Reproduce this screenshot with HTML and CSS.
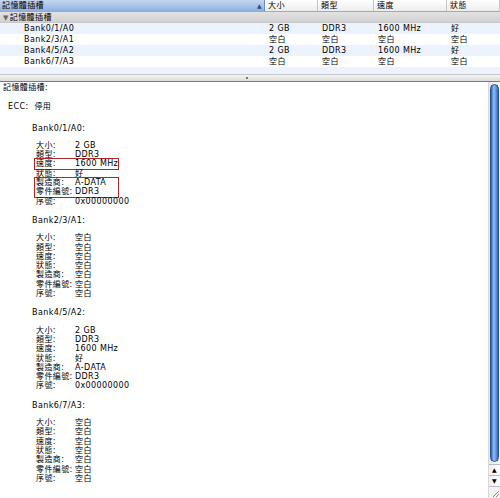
FILE: index.html
```html
<!DOCTYPE html>
<html>
<head>
<meta charset="utf-8">
<link rel="stylesheet" href="styles.css">
</head>
<body>
<div class="window">
  <div class="table">
    <div class="thead">
      <div class="th th-first"><span>記憶體插槽</span><span class="sort">▲</span></div>
      <div class="th">大小</div>
      <div class="th">類型</div>
      <div class="th">速度</div>
      <div class="th">狀態</div>
    </div>
    <div class="group"><span class="tri">▼</span>記憶體插槽</div>
    <div class="row alt"><div class="c0">Bank0/1/A0</div><div>2 GB</div><div>DDR3</div><div>1600 MHz</div><div>好</div></div>
    <div class="row"><div class="c0">Bank2/3/A1</div><div>空白</div><div>空白</div><div>空白</div><div>空白</div></div>
    <div class="row alt"><div class="c0">Bank4/5/A2</div><div>2 GB</div><div>DDR3</div><div>1600 MHz</div><div>好</div></div>
    <div class="row"><div class="c0">Bank6/7/A3</div><div>空白</div><div>空白</div><div>空白</div><div>空白</div></div>
    <div class="row alt short"></div>
  </div>
  <div class="splitter"><span class="grip"></span></div>
  <div class="detail">
    <div class="content">
      <div class="title">記憶體插槽:</div>
      <div class="ecc">ECC:&nbsp; 停用</div>

      <div class="bank">Bank0/1/A0:</div>
      <div class="props">
        <div class="p"><span class="k">大小:</span><span>2 GB</span></div>
        <div class="p"><span class="k">類型:</span><span>DDR3</span></div>
        <div class="boxed">
          <div class="p"><span class="k">速度:</span><span>1600 MHz</span></div>
        </div>
        <div class="p"><span class="k">狀態:</span><span>好</span></div>
        <div class="boxed">
          <div class="p"><span class="k">製造商:</span><span>A-DATA</span></div>
          <div class="p"><span class="k">零件編號:</span><span>DDR3</span></div>
        </div>
        <div class="p"><span class="k">序號:</span><span>0x00000000</span></div>
      </div>

      <div class="bank">Bank2/3/A1:</div>
      <div class="props">
        <div class="p"><span class="k">大小:</span><span>空白</span></div>
        <div class="p"><span class="k">類型:</span><span>空白</span></div>
        <div class="p"><span class="k">速度:</span><span>空白</span></div>
        <div class="p"><span class="k">狀態:</span><span>空白</span></div>
        <div class="p"><span class="k">製造商:</span><span>空白</span></div>
        <div class="p"><span class="k">零件編號:</span><span>空白</span></div>
        <div class="p"><span class="k">序號:</span><span>空白</span></div>
      </div>

      <div class="bank">Bank4/5/A2:</div>
      <div class="props">
        <div class="p"><span class="k">大小:</span><span>2 GB</span></div>
        <div class="p"><span class="k">類型:</span><span>DDR3</span></div>
        <div class="p"><span class="k">速度:</span><span>1600 MHz</span></div>
        <div class="p"><span class="k">狀態:</span><span>好</span></div>
        <div class="p"><span class="k">製造商:</span><span>A-DATA</span></div>
        <div class="p"><span class="k">零件編號:</span><span>DDR3</span></div>
        <div class="p"><span class="k">序號:</span><span>0x00000000</span></div>
      </div>

      <div class="bank">Bank6/7/A3:</div>
      <div class="props">
        <div class="p"><span class="k">大小:</span><span>空白</span></div>
        <div class="p"><span class="k">類型:</span><span>空白</span></div>
        <div class="p"><span class="k">速度:</span><span>空白</span></div>
        <div class="p"><span class="k">狀態:</span><span>空白</span></div>
        <div class="p"><span class="k">製造商:</span><span>空白</span></div>
        <div class="p"><span class="k">零件編號:</span><span>空白</span></div>
        <div class="p"><span class="k">序號:</span><span>空白</span></div>
      </div>
    </div>
    <div class="scrollbar">
      <div class="track"><div class="thumb"></div></div>
      <div class="arrow">▲</div>
      <div class="arrow">▼</div>
      <div class="resize">
        <svg width="10" height="10" viewBox="0 0 10 10"><path d="M9 3 L3 9 M9 6 L6 9" stroke="#888" stroke-width="1" fill="none"/></svg>
      </div>
    </div>
  </div>
</div>
</body>
</html>
```
FILE: styles.css
```css
html, body {
  margin: 0;
  padding: 0;
  background: #fff;
}
body {
  font-family: "DejaVu Sans", "Noto Sans CJK TC", sans-serif;
  font-size: 8px;
  letter-spacing: 0.4px;
  color: #000;
  width: 500px;
  height: 498px;
  overflow: hidden;
}
.window {
  display: flex;
  flex-direction: column;
  height: 498px;
}
.table {
  display: flex;
  flex-direction: column;
}
.thead, .row {
  display: grid;
  grid-template-columns: 265px 53px 56px 73px 1fr;
}
.thead {
  height: 12px;
  line-height: 11px;
  background: linear-gradient(#ffffff, #ececec);
  border-bottom: 1px solid #a8a8a8;
  box-sizing: border-box;
}
.th {
  padding-left: 3px;
  border-right: 1px solid #c4c4c4;
  overflow: hidden;
  white-space: nowrap;
}
.th-first {
  display: flex;
  justify-content: space-between;
  padding-left: 2px;
  padding-right: 2px;
  background: linear-gradient(#c5d7f0, #8fb1df);
  border-right: 1px solid #6d8fc0;
}
.sort {
  font-size: 6px;
  color: #2a4d80;
}
.group {
  height: 11px;
  line-height: 11px;
  background: linear-gradient(#e2e2e2, #d2d2d2);
  padding-left: 3px;
  border-bottom: 1px solid #c8c8c8;
  box-sizing: border-box;
}
.tri {
  color: #666;
  font-size: 7px;
  margin-right: 1px;
}
.row {
  height: 11px;
  line-height: 12px;
  background: #fff;
}
.row > div {
  padding-left: 4px;
  white-space: nowrap;
}
.row .c0 {
  padding-left: 24px;
}
.row.alt {
  background: #edf3fe;
}
.row.short {
  height: 7px;
}
.splitter {
  height: 6px;
  background: linear-gradient(#f4f4f4, #dcdcdc);
  border-top: 1px solid #c8c8c8;
  border-bottom: 1px solid #7a7a7a;
  display: flex;
  justify-content: center;
  align-items: center;
}
.grip {
  width: 2px;
  height: 2px;
  background: #777;
  margin-left: -6px;
}
.detail {
  flex: 1;
  display: flex;
  min-height: 0;
}
.content {
  flex: 1;
  padding: 1px 0 0 3px;
  line-height: 9.3px;
  white-space: nowrap;
}
.title {
  margin-bottom: 10px;
}
.ecc {
  padding-left: 5px;
  margin-bottom: 12px;
}
.bank {
  padding-left: 29px;
  margin-bottom: 8px;
}
.props {
  padding-left: 33px;
  margin-bottom: 10px;
}
.p {
  display: flex;
}
.k {
  width: 39px;
  flex: none;
}
.boxed {
  width: 85px;
  margin: -1px 0 -1px -2px;
  padding-left: 1px;
  border: 1px solid #a8282c;
  box-sizing: border-box;
}
.scrollbar {
  width: 11px;
  display: flex;
  flex-direction: column;
  background: #f4f4f4;
  border-left: 1px solid #d8d8d8;
}
.track {
  flex: 1;
  padding: 2px 1px 2px 1px;
  display: flex;
  background: linear-gradient(90deg, #e8e8e8, #fafafa);
}
.thumb {
  flex: 1;
  border-radius: 5px;
  background: linear-gradient(90deg, #2a5fb0, #8cc0f5 40%, #5f9ae6 70%, #2e63b4);
  border: 1px solid #274f90;
}
.arrow {
  height: 10px;
  line-height: 10px;
  font-size: 6px;
  text-align: center;
  border-top: 1px solid #bcbcbc;
  background: linear-gradient(90deg, #f0f0f0, #fff);
}
.resize {
  height: 11px;
  border-top: 1px solid #bcbcbc;
  display: flex;
  align-items: center;
  justify-content: center;
}
```
